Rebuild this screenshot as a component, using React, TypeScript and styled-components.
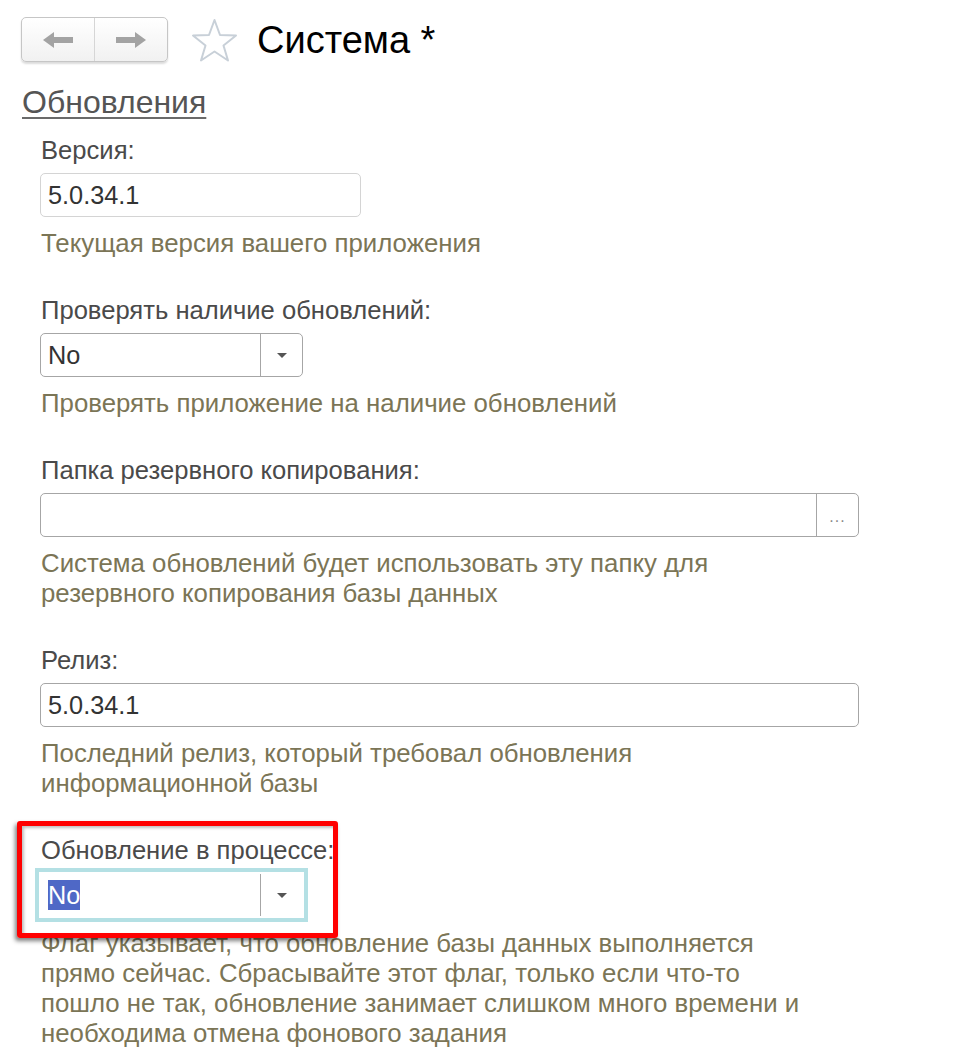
import React from "react";
import styled, { createGlobalStyle } from "styled-components";

const GlobalStyle = createGlobalStyle`
  html, body {
    margin: 0;
    padding: 0;
    background: #ffffff;
  }
  body {
    font-family: "Liberation Sans", Arial, sans-serif;
  }
`;

const Page = styled.div`
  padding-top: 17px;
  width: 956px;
  min-height: 1060px;
  box-sizing: border-box;
`;

const Header = styled.div`
  display: flex;
  align-items: center;
  height: 45px;
  padding-left: 21px;
`;

const NavGroup = styled.div`
  display: flex;
  height: 45px;
  box-sizing: border-box;
  border: 1px solid #c6c6c6;
  border-radius: 5px;
  background: linear-gradient(#ffffff, #f1f1f1);
  box-shadow: 0 2px 2px rgba(0, 0, 0, 0.14);
  overflow: hidden;
`;

const NavButton = styled.div<{ $divider?: boolean }>`
  width: 72px;
  height: 100%;
  display: flex;
  align-items: center;
  justify-content: center;
  border-right: ${(p) => (p.$divider ? "1px solid #d6d6d6" : "none")};
`;

const StarBox = styled.div`
  margin-left: 23px;
  width: 47px;
  height: 44px;
  display: flex;
  align-items: center;
  justify-content: center;
`;

const Title = styled.h1`
  margin: 0 0 0 19px;
  font-size: 38px;
  font-weight: normal;
  color: #000;
  line-height: 45px;
  padding-top: 2px;
`;

const SectionLink = styled.a`
  display: inline-block;
  margin: 25px 0 0 22px;
  font-size: 32px;
  line-height: 30px;
  color: #555555;
  text-decoration: underline;
  text-decoration-thickness: 2px;
  text-underline-offset: 4px;
  text-decoration-color: #6a6a6a;
`;

const Fields = styled.div`
  padding: 18px 0 0 40px;
  display: flex;
  flex-direction: column;
  gap: 37px;
`;

const Field = styled.div`
  position: relative;
  display: flex;
  flex-direction: column;
  align-items: flex-start;
`;

const Label = styled.div`
  font-size: 25.6px;
  line-height: 30px;
  color: #4a4a4a;
  margin-bottom: 8px;
  margin-left: 1px;
`;

const Hint = styled.div`
  margin-top: 11px;
  margin-left: 1px;
  font-size: 25.8px;
  line-height: 30px;
  color: #7b7556;
`;

const Box = styled.div<{ $width: number; $light?: boolean; $focused?: boolean }>`
  width: ${(p) => p.$width}px;
  height: 44px;
  box-sizing: border-box;
  display: flex;
  align-items: stretch;
  background: #fff;
  border: 1px solid
    ${(p) => (p.$focused ? "#ffffff" : p.$light ? "#d4d4d4" : "#a6a6a6")};
  border-radius: ${(p) => (p.$focused ? "0" : "5px")};
  outline: ${(p) => (p.$focused ? "4px solid #b4e0e4" : "none")};
  outline-offset: 1px;
`;

const Value = styled.div`
  flex: 1;
  display: flex;
  align-items: center;
  padding-left: 7px;
  font-size: 25.3px;
  color: #333333;
`;

const Selected = styled.span`
  background: #4f68c6;
  color: #ffffff;
  line-height: 30px;
`;

const SideButton = styled.div`
  width: 41px;
  display: flex;
  align-items: center;
  justify-content: center;
  border-left: 1px solid #a6a6a6;
`;

const Caret = styled.div`
  width: 0;
  height: 0;
  border-left: 5px solid transparent;
  border-right: 5px solid transparent;
  border-top: 5px solid #555555;
`;

const Dots = styled.span`
  font-size: 16px;
  color: #8a8a8a;
  letter-spacing: 1px;
  margin-top: 4px;
`;

const Highlight = styled.div`
  position: absolute;
  left: -23px;
  top: -14px;
  width: 321px;
  height: 117px;
  box-sizing: border-box;
  border: 5px solid #ff0000;
  border-radius: 3px;
  box-shadow: -2px 3px 4px rgba(0, 0, 0, 0.5),
    inset 2px 2px 3px rgba(0, 0, 0, 0.25);
  pointer-events: none;
  z-index: 2;
`;

const ArrowLeft = () => (
  <svg width="30" height="16" viewBox="0 0 30 16">
    <polygon points="0,8 11,0 11,5 30,5 30,11 11,11 11,16" fill="#a3a3a3" />
  </svg>
);

const ArrowRight = () => (
  <svg width="30" height="16" viewBox="0 0 30 16">
    <polygon points="30,8 19,0 19,5 0,5 0,11 19,11 19,16" fill="#a3a3a3" />
  </svg>
);

const Star = () => (
  <svg width="47" height="44" viewBox="0 0 47 44">
    <polygon
      points="23.5,2 29,17 45,17.5 32.5,27.5 37,42.5 23.5,33.5 10,42.5 14.5,27.5 2,17.5 18,17"
      fill="none"
      stroke="#c8d0d8"
      strokeWidth="2"
      strokeLinejoin="round"
    />
  </svg>
);

export default function App() {
  return (
    <>
      <GlobalStyle />
      <Page>
        <Header>
          <NavGroup>
            <NavButton $divider>
              <ArrowLeft />
            </NavButton>
            <NavButton>
              <ArrowRight />
            </NavButton>
          </NavGroup>
          <StarBox>
            <Star />
          </StarBox>
          <Title>Система *</Title>
        </Header>
        <SectionLink>Обновления</SectionLink>
        <Fields>
          <Field>
            <Label>Версия:</Label>
            <Box $width={321} $light>
              <Value>5.0.34.1</Value>
            </Box>
            <Hint>Текущая версия вашего приложения</Hint>
          </Field>
          <Field>
            <Label>Проверять наличие обновлений:</Label>
            <Box $width={263}>
              <Value>No</Value>
              <SideButton>
                <Caret />
              </SideButton>
            </Box>
            <Hint>Проверять приложение на наличие обновлений</Hint>
          </Field>
          <Field>
            <Label>Папка резервного копирования:</Label>
            <Box $width={819}>
              <Value />
              <SideButton>
                <Dots>...</Dots>
              </SideButton>
            </Box>
            <Hint>
              Система обновлений будет использовать эту папку для
              <br />
              резервного копирования базы данных
            </Hint>
          </Field>
          <Field>
            <Label>Релиз:</Label>
            <Box $width={819}>
              <Value>5.0.34.1</Value>
            </Box>
            <Hint>
              Последний релиз, который требовал обновления
              <br />
              информационной базы
            </Hint>
          </Field>
          <Field>
            <Highlight />
            <Label>Обновление в процессе:</Label>
            <Box $width={263} $focused>
              <Value>
                <Selected>No</Selected>
              </Value>
              <SideButton>
                <Caret />
              </SideButton>
            </Box>
            <Hint>
              Флаг указывает, что обновление базы данных выполняется
              <br />
              прямо сейчас. Сбрасывайте этот флаг, только если что-то
              <br />
              пошло не так, обновление занимает слишком много времени и
              <br />
              необходима отмена фонового задания
            </Hint>
          </Field>
        </Fields>
      </Page>
    </>
  );
}
